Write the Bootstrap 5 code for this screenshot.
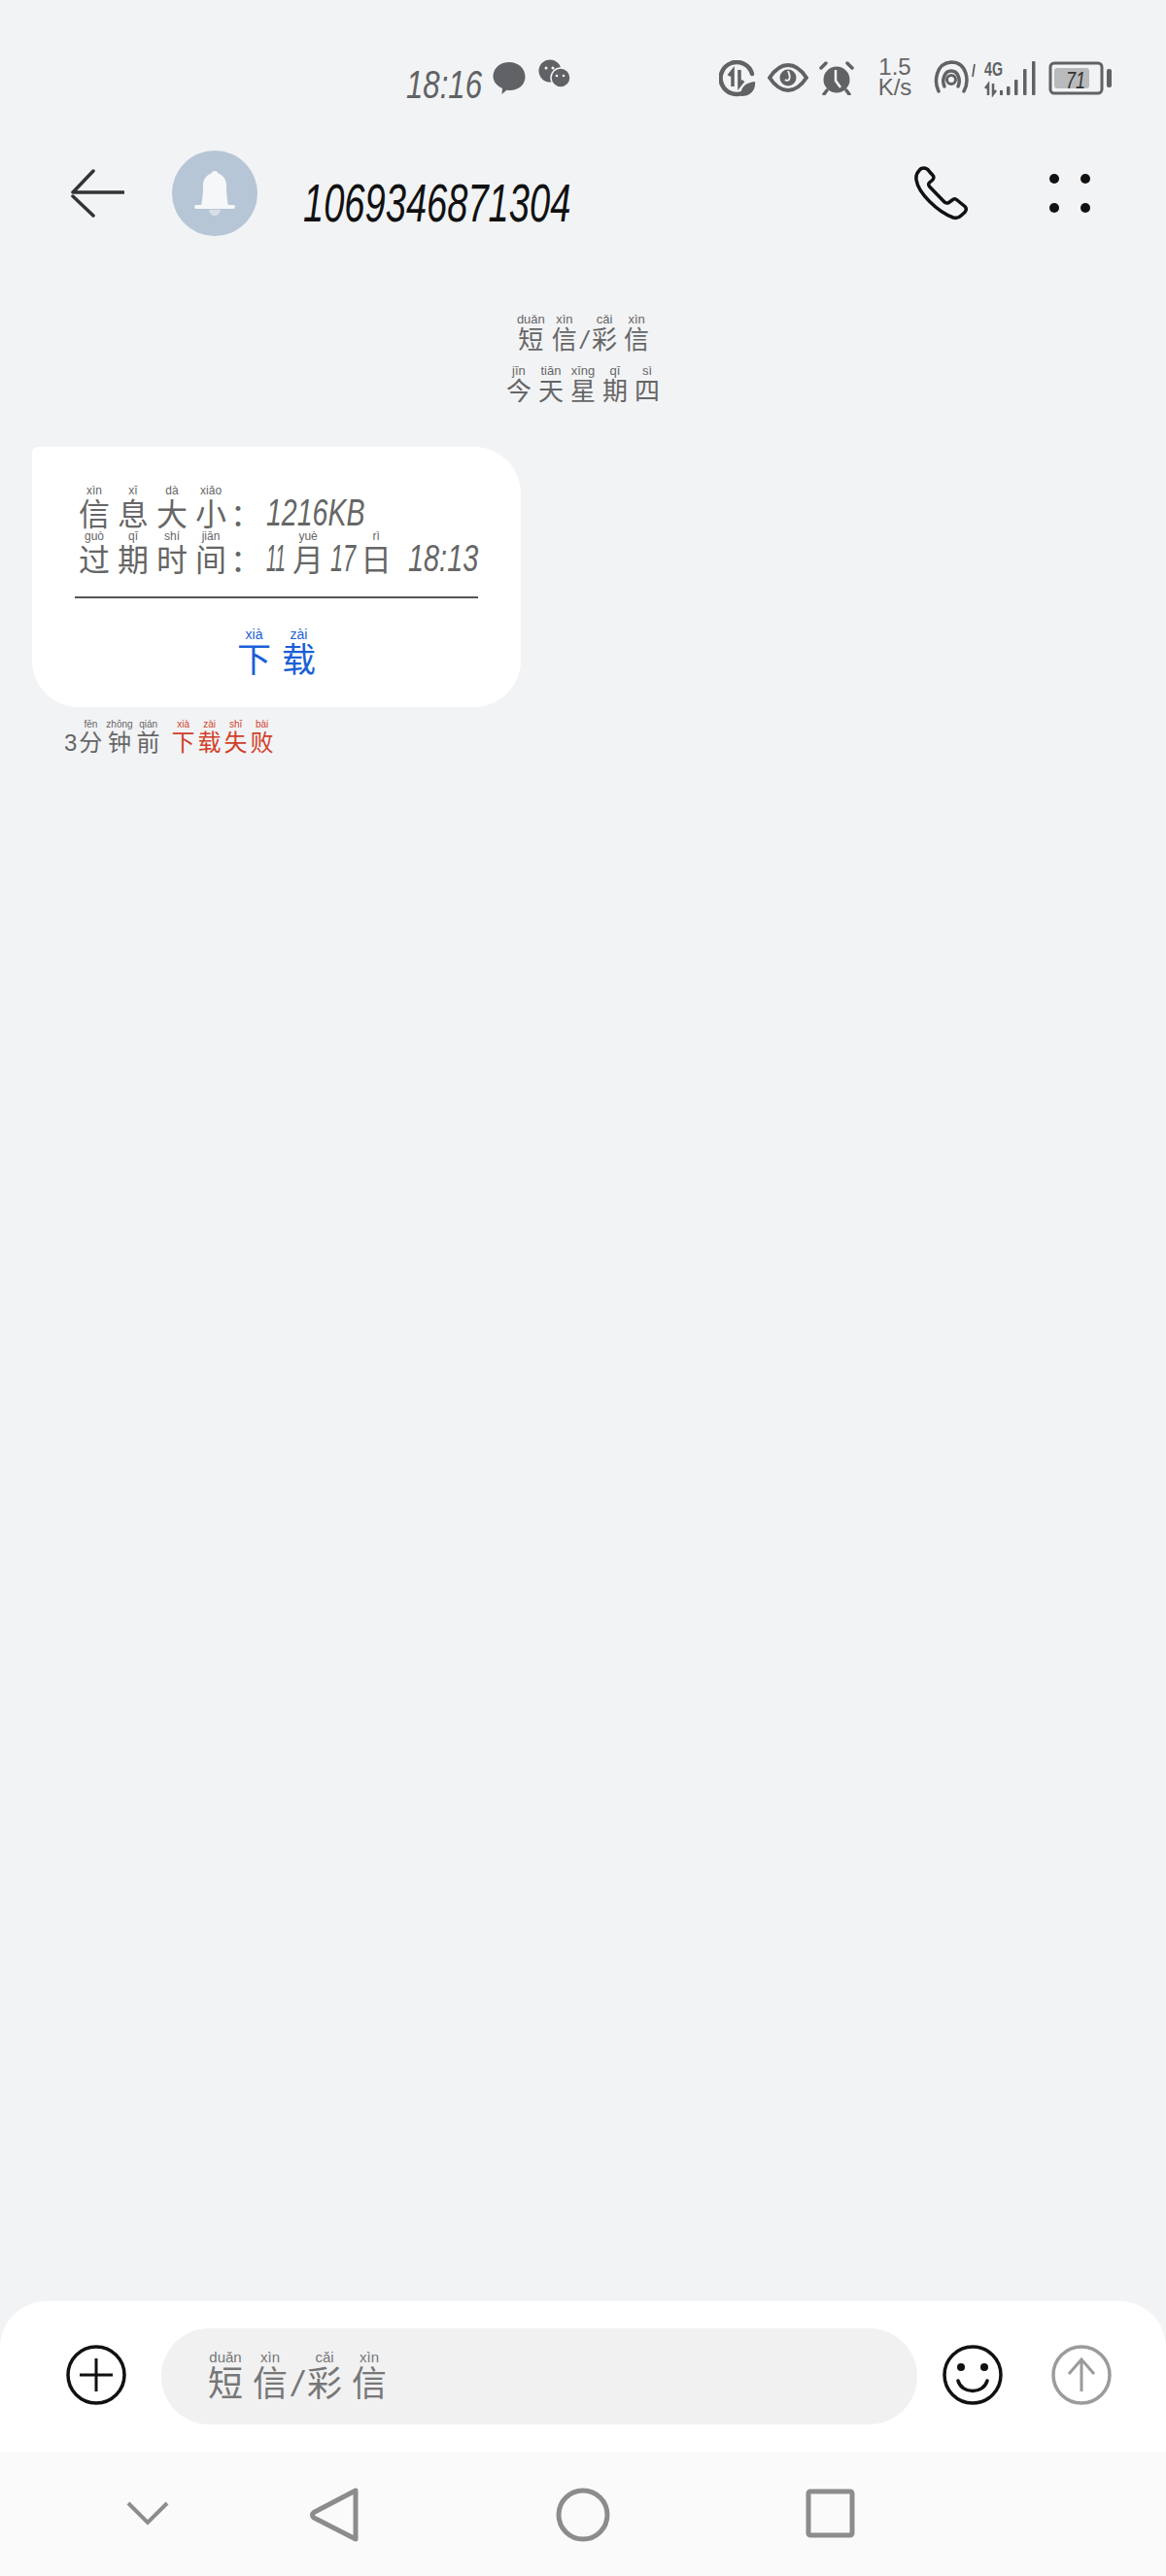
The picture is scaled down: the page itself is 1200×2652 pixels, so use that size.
<!DOCTYPE html>
<html lang="zh-CN">
<head>
  <meta charset="UTF-8">
  <meta name="viewport" content="width=device-width, initial-scale=1.0">
  <title>1069346871304</title>
  <link href="https://cdn.jsdelivr.net/npm/bootstrap@5.3.0/dist/css/bootstrap.min.css" rel="stylesheet">
  <style>
    body {
      background-color: #f2f3f5;
      font-family: "Liberation Sans", "Noto Sans CJK SC", sans-serif;
      color: #666;
    }

    .phone {
      height: 2652px;
    }

    rt {
      font-family: "Liberation Sans", sans-serif;
      font-size: 12px;
      line-height: 12px;
      letter-spacing: 0;
      font-weight: 400;
      text-align: center;
    }

    ruby {
      font-family: "Noto Sans CJK SC", sans-serif;
    }

    .num {
      display: inline-block;
      font-style: italic;
      white-space: nowrap;
      transform-origin: 0 50%;
    }

    .status-row {
      height: 130px;
      padding-top: 58px;
      padding-left: 418px;
      color: #606265;
    }

    .status-time {
      width: 78px;
      font-size: 40px;
      line-height: 46px;
      margin-top: 6px;
      transform: scaleX(.78);
    }

    .net-speed {
      width: 38px;
      margin-left: 23px;
      font-size: 24px;
      line-height: 21px;
      text-align: center;
      color: #666;
      white-space: nowrap;
    }

    .head-row {
      height: 138px;
      padding-left: 72px;
    }

    .avatar-dot {
      width: 88px;
      height: 88px;
      margin-left: 49px;
      background-color: #b6c6d6;
    }

    .head-number {
      margin-left: 47px;
      width: 276px;
      font-size: 56px;
      line-height: 60px;
      color: #111;
      padding-top: 20px;
      transform: scaleX(.68);
    }

    .call-icon {
      margin-left: auto;
      margin-right: 83px;
    }

    .more-icon {
      margin-right: 78px;
    }

    .date-block {
      margin-top: 54px;
      font-size: 26px;
      line-height: 50px;
      height: 104px;
      color: #666;
    }

    .date-block rt {
      font-size: 13px;
    }

    .date-block ruby + ruby {
      margin-left: 7px;
    }

    .date-slash {
      font-style: italic;
      margin: 0 4px;
    }

    .msg-bubble {
      margin-top: 34px;
      margin-left: 33px;
      width: 503px;
      height: 268px;
      background-color: #fff;
      border-radius: 6px 48px 48px 48px;
      padding: 39px 44px 0;
    }

    .msg-line {
      font-size: 32px;
      line-height: 47px;
      height: 47px;
      white-space: nowrap;
      padding-left: 4px;
      color: #666;
    }

    .msg-line ruby {
      margin-right: 8px;
    }

    .msg-line .num {
      font-size: 38px;
      line-height: 47px;
    }

    .msg-line ruby.msg-colon {
      margin-left: -4px;
      margin-right: 5px;
    }

    .size-val {
      width: 100px;
      transform: scaleX(.75);
    }

    .month-val {
      width: 20px;
      margin-right: 7px;
      transform: scaleX(.5);
    }

    .msg-line ruby.tight {
      margin-right: 7px;
    }

    .day-val {
      width: 26px;
      margin-right: 5px;
      transform: scaleX(.62);
    }

    .msg-line ruby.day-unit {
      margin-right: 17px;
    }

    .time-val {
      width: 72px;
      transform: scaleX(.76);
    }

    .msg-rule {
      height: 2px;
      background-color: #555;
      margin-top: 21px;
    }

    .msg-action {
      margin-top: 31px;
      font-size: 35px;
      line-height: 50px;
      color: #1a5fd8;
    }

    .msg-action ruby + ruby {
      margin-left: 11px;
    }

    .msg-action rt {
      font-size: 14px;
    }

    .msg-meta {
      margin-top: 13px;
      margin-left: 66px;
      font-size: 24px;
      line-height: 36px;
      color: #666;
    }

    .msg-meta rt {
      font-size: 10px;
    }

    .msg-meta ruby {
      margin-right: 4px;
    }

    .meta-count {
      margin-right: 2px;
    }

    .msg-fail {
      color: #d13f2a;
      margin-left: 8px;
    }

    .msg-fail ruby {
      margin-right: 3px;
    }

    .composer {
      height: 155px;
      background-color: #fff;
      border-radius: 48px 48px 0 0;
      padding: 28px 34px 0 68px;
    }

    .composer-icon {
      margin-top: 17px;
    }

    .composer-input {
      width: 778px;
      height: 99px;
      margin-left: 36px;
      margin-right: 26px;
      background-color: #f1f1f2;
      border-radius: 50px;
      padding-left: 48px;
      padding-top: 8px;
      font-size: 36px;
      color: #777;
    }

    .composer-input rt {
      font-size: 15px;
    }

    .composer-input ruby + ruby {
      margin-left: 10px;
    }

    .input-slash {
      font-style: italic;
      margin: 0 5px;
    }

    .send-icon {
      margin-left: 50px;
    }

    .nav-strip {
      height: 128px;
      background-color: #fafafa;
    }

    .nav-slot {
      top: 37px;
    }
    .nav-a { left: 130px; top: 50px; }
    .nav-b { left: 318px; }
    .nav-c { left: 572px; }
    .nav-d { left: 828px; top: 38px; }

    .st-data { margin-left: 148px; margin-top: 4px; }
    .st-eye { margin-left: 12px; margin-top: 7px; }
    .st-alarm { margin-left: 11px; margin-top: 4px; }
    .st-hot { margin-left: 20px; margin-top: 4px; }
    .st-signal { margin-left: 9px; margin-top: 2px; }
    .st-batt { margin-left: 10px; margin-top: 5px; }
  </style>
</head>
<body>
  <div class="phone d-flex flex-column overflow-hidden">

    <!-- status bar -->
    <div class="status-row d-flex align-items-start">
      <div class="status-time num">18:16</div>
      <svg class="ms-2" width="40" height="40" viewBox="0 0 40 40"><path d="M20 6c9.500 0 16.500 6.500 16.500 15S29.500 35 20.500 35c-1 0-2 0-3-.2l-5 4.200.500-6C7 30 3.500 26 3.500 20.500 3.500 12.500 10.500 6 20 6z" fill="#606265"/></svg>
      <svg class="ms-2" width="40" height="36" viewBox="0 0 40 36"><circle cx="14" cy="15" r="11.500" fill="#606265"/><circle cx="25" cy="22" r="10" fill="#606265" stroke="#f2f3f5" stroke-width="1.500"/><circle cx="10" cy="12" r="1.500" fill="#f2f3f5"/><circle cx="17" cy="12" r="1.500" fill="#f2f3f5"/><circle cx="21" cy="20" r="1.300" fill="#f2f3f5"/><circle cx="28" cy="20" r="1.300" fill="#f2f3f5"/></svg>

      <!-- data saver -->
      <svg class="st-data" width="38" height="38" viewBox="0 0 38 38"><path d="M26 33A16.500 16.500 0 1 1 34 14" fill="none" stroke="#606265" stroke-width="4.500" stroke-linecap="round"/><path d="M14 27V11l-4 5M21 10v16l4-5" fill="none" stroke="#606265" stroke-width="3.500"/><path d="M23 37c-2-7 3-14 14-15 1 9-5 15-14 15z" fill="#606265"/></svg>
      <!-- eye -->
      <svg class="st-eye" width="42" height="30" viewBox="0 0 42 30"><path d="M2 15C8 6 14 2 21 2s13 4 19 13c-6 9-12 13-19 13S8 24 2 15z" fill="none" stroke="#606265" stroke-width="4"/><circle cx="21" cy="15" r="8.500" fill="#606265"/><path d="M21 8c1 3 3 5 1 9-1 1-3 1-4 0" fill="none" stroke="#f2f3f5" stroke-width="1.800"/></svg>
      <!-- alarm -->
      <svg class="st-alarm" width="36" height="36" viewBox="0 0 36 36"><circle cx="18" cy="20" r="13.500" fill="#606265"/><path d="M2 8l5-5M34 8l-5-5M8 31l-3 4M28 31l3 4" stroke="#606265" stroke-width="3.500" stroke-linecap="round"/><path d="M17 10v11l5 7" fill="none" stroke="#f2f3f5" stroke-width="2.500"/></svg>
      <div class="net-speed">1.5<br>K/s</div>
      <!-- hotspot -->
      <svg class="st-hot" width="44" height="36" viewBox="0 0 44 36"><path d="M6 32C1 22 3 3 19 2c16 0 19 19 13 30" fill="none" stroke="#606265" stroke-width="3.500" stroke-linecap="round"/><path d="M12 27c-3-7 0-16 7-16s10 9 7 16" fill="none" stroke="#606265" stroke-width="3.500" stroke-linecap="round"/><circle cx="19" cy="20" r="4.500" fill="none" stroke="#606265" stroke-width="3"/><path d="M43 4l-2 13" stroke="#606265" stroke-width="1.800"/></svg>
      <!-- 4G + signal -->
      <svg class="st-signal" width="56" height="40" viewBox="0 0 56 40"><text x="0" y="18" font-family="Liberation Sans, sans-serif" font-size="20" font-weight="700" textLength="19" lengthAdjust="spacingAndGlyphs" fill="#606265">4G</text><path d="M4 38V27l-3 4M9 26v11l3-4" fill="none" stroke="#606265" stroke-width="2.500"/><g fill="#606265"><rect x="16" y="33" width="3" height="5"/><rect x="23" y="29" width="3.500" height="9" rx="1"/><rect x="31" y="22" width="3.500" height="16" rx="1"/><rect x="40" y="11" width="3.500" height="27" rx="1"/><rect x="49" y="3" width="3.500" height="35" rx="1"/></g></svg>
      <!-- battery -->
      <svg class="st-batt" width="66" height="36" viewBox="0 0 66 36"><rect x="2" y="2" width="53" height="31" rx="4" fill="none" stroke="#606265" stroke-width="3"/><rect x="6" y="7" width="36" height="21" rx="3" fill="#b9babc"/><rect x="60" y="8" width="5" height="19" rx="2" fill="#606265"/><text x="18" y="28" font-family="Liberation Sans, sans-serif" font-style="italic" font-size="24" textLength="20" lengthAdjust="spacingAndGlyphs" fill="#333">71</text></svg>
    </div>

    <!-- conversation header -->
    <div class="head-row d-flex align-items-center">
      <svg width="56" height="50" viewBox="0 0 56 50"><path d="M24 2L3 24h52M3 28l21 20" fill="none" stroke="#333" stroke-width="3.500" stroke-linecap="round" stroke-linejoin="round"/></svg>
      <div class="avatar-dot rounded-circle d-flex align-items-center justify-content-center">
        <svg width="44" height="46" viewBox="0 0 44 46"><path d="M22 0c2 0 3 1 3.500 2.500C31 4.500 34 9 34 15c0 7 .5 13 2 21H8c1.500-8 2-14 2-21C10 9 13 4.500 18.500 2.500 19 1 20 0 22 0z" fill="#f5f7f9"/><rect x="1" y="35" width="42" height="4" rx="2" fill="#f5f7f9"/><path d="M16 40h12c-1 4-3 6-6 6s-5-2-6-6z" fill="#d7e0e8"/></svg>
      </div>
      <div class="head-number num">1069346871304</div>
      <svg class="call-icon" width="56" height="56" viewBox="0 0 56 56"><path d="M9.700 2C12 2 14 3.500 15 5l4 4.500c1.500 1.500 1 3.500-.5 5l-3 2.500c-1 1-1 2.500 0 4l15.500 16c1.500 1 3 1.500 4.500.5l3.500-2.500c1.500-1.500 3.500-1.500 5 0l8 6.500c2 2 1.500 4 0 6L48 51c-2 2-4.500 3-8 2C24 47 4 28 2 14c-.5-4 .5-7 3-9.500C6 3 8 2 9.700 2z" fill="none" stroke="#111" stroke-width="3.500" stroke-linejoin="round"/></svg>
      <svg class="more-icon" width="42" height="40" viewBox="0 0 42 40"><g fill="#111"><circle cx="5" cy="5" r="5"/><circle cx="37" cy="5" r="5"/><circle cx="5" cy="35" r="5"/><circle cx="37" cy="35" r="5"/></g></svg>
    </div>

    <!-- date -->
    <div class="date-block text-center">
      <div><ruby>短<rt>duǎn</rt></ruby><ruby>信<rt>xìn</rt></ruby><span class="date-slash">/</span><ruby>彩<rt>cǎi</rt></ruby><ruby>信<rt>xìn</rt></ruby></div>
      <div><ruby>今<rt>jīn</rt></ruby><ruby>天<rt>tiān</rt></ruby><ruby>星<rt>xīng</rt></ruby><ruby>期<rt>qī</rt></ruby><ruby>四<rt>sì</rt></ruby></div>
    </div>

    <!-- message -->
    <div class="flex-grow-1">
      <div class="msg-bubble">
        <div class="msg-line"><ruby>信<rt>xìn</rt></ruby><ruby>息<rt>xī</rt></ruby><ruby>大<rt>dà</rt></ruby><ruby>小<rt>xiǎo</rt></ruby><ruby class="msg-colon">：</ruby><span class="num size-val">1216KB</span></div>
        <div class="msg-line"><ruby>过<rt>guò</rt></ruby><ruby>期<rt>qī</rt></ruby><ruby>时<rt>shí</rt></ruby><ruby>间<rt>jiān</rt></ruby><ruby class="msg-colon">：</ruby><span class="num month-val">11</span><ruby class="tight">月<rt>yuè</rt></ruby><span class="num day-val">17</span><ruby class="day-unit">日<rt>rì</rt></ruby><span class="num time-val">18:13</span></div>
        <div class="msg-rule"></div>
        <div class="msg-action text-center"><ruby>下<rt>xià</rt></ruby><ruby>载<rt>zài</rt></ruby></div>
      </div>
      <div class="msg-meta"><span class="meta-count">3</span><ruby>分<rt>fēn</rt></ruby><ruby>钟<rt>zhōng</rt></ruby><ruby>前<rt>qián</rt></ruby><span class="msg-fail"><ruby>下<rt>xià</rt></ruby><ruby>载<rt>zài</rt></ruby><ruby>失<rt>shī</rt></ruby><ruby>败<rt>bài</rt></ruby></span></div>
    </div>

    <!-- composer -->
    <div class="composer d-flex align-items-start">
      <svg class="composer-icon" width="62" height="62" viewBox="0 0 62 62"><circle cx="31" cy="31" r="29" fill="none" stroke="#111" stroke-width="3.500"/><path d="M31 14v34M14 31h34" stroke="#111" stroke-width="3"/></svg>
      <div class="composer-input d-flex align-items-center">
        <div><ruby>短<rt>duǎn</rt></ruby><ruby>信<rt>xìn</rt></ruby><span class="input-slash">/</span><ruby>彩<rt>cǎi</rt></ruby><ruby>信<rt>xìn</rt></ruby></div>
      </div>
      <svg class="composer-icon" width="62" height="62" viewBox="0 0 62 62"><circle cx="31" cy="31" r="29" fill="none" stroke="#111" stroke-width="3.500"/><circle cx="19" cy="23" r="4" fill="#111"/><circle cx="43" cy="23" r="4" fill="#111"/><path d="M16 37c4 14 26 14 30 0" fill="none" stroke="#111" stroke-width="3.500" stroke-linecap="round"/></svg>
      <svg class="composer-icon send-icon" width="62" height="62" viewBox="0 0 62 62"><circle cx="31" cy="31" r="29" fill="none" stroke="#9b9b9b" stroke-width="3.500"/><path d="M31 48V15M18 30l13-15 13 15" fill="none" stroke="#9b9b9b" stroke-width="3"/></svg>
    </div>

    <!-- android nav -->
    <div class="nav-strip position-relative">
      <svg class="position-absolute nav-a" width="44" height="26" viewBox="0 0 44 26"><path d="M2 3l20 20L42 3" fill="none" stroke="#8c8c8c" stroke-width="4"/></svg>
      <svg class="position-absolute nav-slot nav-b" width="52" height="56" viewBox="0 0 52 56"><path d="M48 3v50L5 31c-2-1.500-2-4 0-5.500z" fill="none" stroke="#8c8c8c" stroke-width="5" stroke-linejoin="round"/></svg>
      <svg class="position-absolute nav-slot nav-c" width="56" height="56" viewBox="0 0 56 56"><circle cx="28" cy="28" r="25" fill="none" stroke="#8c8c8c" stroke-width="5"/></svg>
      <svg class="position-absolute nav-d" width="52" height="52" viewBox="0 0 52 52"><rect x="4" y="3" width="45" height="45" rx="2" fill="none" stroke="#8c8c8c" stroke-width="5"/></svg>
    </div>
  </div>
  <script src="https://cdn.jsdelivr.net/npm/bootstrap@5.3.0/dist/js/bootstrap.bundle.min.js"></script>
</body>
</html>
